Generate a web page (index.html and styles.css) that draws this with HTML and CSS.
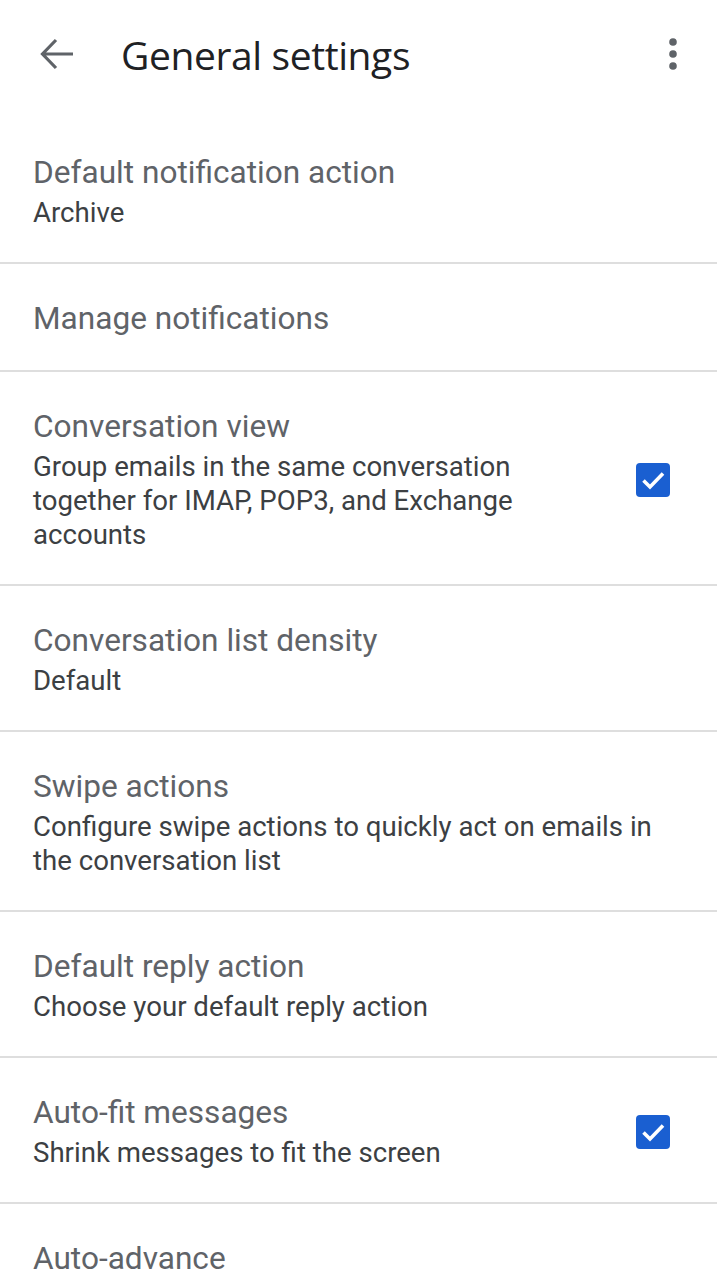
FILE: index.html
```html
<!DOCTYPE html>
<html>
<head>
<meta charset="utf-8">
<link rel="stylesheet" href="styles.css">
</head>
<body>
<header class="appbar">
  <svg class="back" width="34" height="32" viewBox="0 0 34 32"><path d="M33 16H3M16 2L2.5 16L16 30" fill="none" stroke="#5f6368" stroke-width="3.2"/></svg>
  <h1 class="title">General settings</h1>
  <svg class="more" width="10" height="34" viewBox="0 0 10 34"><circle cx="5" cy="5" r="3.8" fill="#5f6368"/><circle cx="5" cy="17" r="3.8" fill="#5f6368"/><circle cx="5" cy="29" r="3.8" fill="#5f6368"/></svg>
</header>
<main class="list">
  <div class="row"><div class="text"><div class="t">Default notification action</div><div class="s">Archive</div></div></div>
  <div class="row"><div class="text"><div class="t">Manage notifications</div></div></div>
  <div class="row"><div class="text narrow"><div class="t">Conversation view</div><div class="s">Group emails in the same conversation together for IMAP, POP3, and Exchange accounts</div></div><span class="cb"><svg width="34" height="34" viewBox="0 0 34 34"><path d="M7.5 17.5l6.5 6.5L27 10.5" fill="none" stroke="#fff" stroke-width="3.6"/></svg></span></div>
  <div class="row"><div class="text"><div class="t">Conversation list density</div><div class="s">Default</div></div></div>
  <div class="row"><div class="text"><div class="t">Swipe actions</div><div class="s">Configure swipe actions to quickly act on emails in the conversation list</div></div></div>
  <div class="row"><div class="text"><div class="t">Default reply action</div><div class="s">Choose your default reply action</div></div></div>
  <div class="row"><div class="text"><div class="t">Auto-fit messages</div><div class="s">Shrink messages to fit the screen</div></div><span class="cb"><svg width="34" height="34" viewBox="0 0 34 34"><path d="M7.5 17.5l6.5 6.5L27 10.5" fill="none" stroke="#fff" stroke-width="3.6"/></svg></span></div>
  <div class="row"><div class="text"><div class="t">Auto-advance</div></div></div>
</main>
</body>
</html>
```
FILE: styles.css
```css
html, body { margin: 0; padding: 0; background: #fff; }
body { font-family: Roboto, "Noto Sans", sans-serif; width: 717px; height: 1280px; overflow: hidden; }
.appbar { height: 108px; padding-bottom: 10px; display: flex; align-items: center; box-sizing: content-box; }
.back { margin-left: 40px; flex: none; }
.title { margin: 0 0 0 47px; font-family: "Open Sans", Roboto, sans-serif; font-weight: 400; font-size: 39px; color: #202124; letter-spacing: -0.4px; flex: 1; }
.more { margin-right: 39px; flex: none; }
.list { display: flex; flex-direction: column; }
.row { display: flex; align-items: center; padding: 36px 47px 32px 33px; border-bottom: 2px solid #dedede; }
.row:last-child { border-bottom: none; }
.text { flex: 1; min-width: 0; }
.text.narrow { padding-right: 80px; }
.t { font-size: 31.6px; line-height: 38px; color: #5f6368; }
.s { font-size: 27.6px; line-height: 34px; color: #3c4043; margin-top: 4px; }
.cb { flex: none; width: 34px; height: 34px; border-radius: 4px; background: #1a5fd1; display: flex; }
```
